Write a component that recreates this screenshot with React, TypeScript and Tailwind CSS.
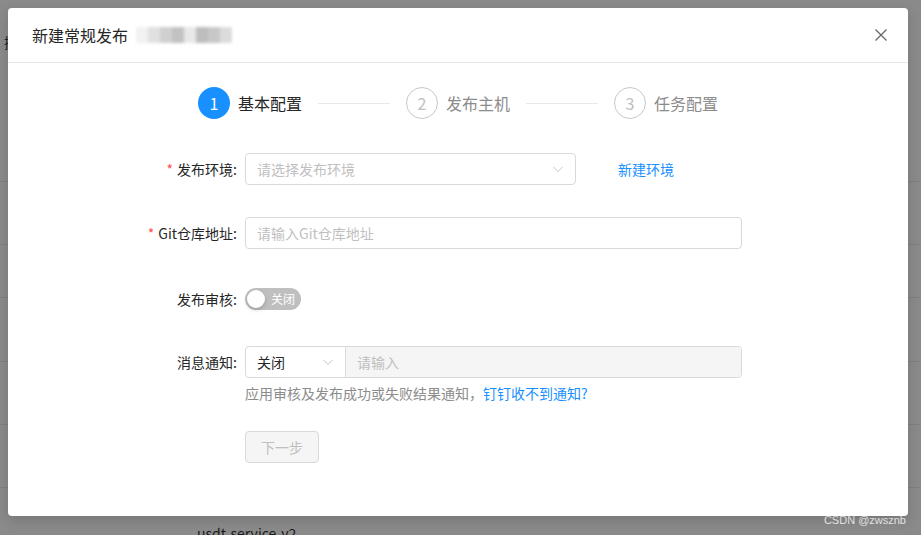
import React from 'react';

const font = { fontFamily: '"Noto Sans CJK SC", "Noto Sans", sans-serif' };

const steps = [
  { n: 1, label: '基本配置', active: true },
  { n: 2, label: '发布主机', active: false },
  { n: 3, label: '任务配置', active: false },
];

const Label: React.FC<{ text: string; required?: boolean }> = ({ text, required }) => (
  <div className="w-[237px] shrink-0 flex items-center justify-end pr-[8px] text-[14px] text-[#262626]">
    {required && <span className="text-[#ff4d4f] mr-[4px] text-[14px] leading-none">*</span>}
    <span>{text}:</span>
  </div>
);

const Chevron = () => (
  <svg width="12" height="12" viewBox="0 0 12 12" fill="none">
    <path d="M1.5 4l4.5 4.5L10.5 4" stroke="#c4c4c4" strokeWidth="1" />
  </svg>
);

export default function App() {
  return (
    <div className="relative w-[921px] h-[535px] overflow-hidden bg-[#8a8a8a]" style={font}>
      {/* background page rows */}
      <div className="flex flex-col">
        <div className="h-[182px] border-b border-[#7f7f7f]" />
        <div className="h-[63px] border-b border-[#7f7f7f]" />
        <div className="h-[53px] border-b border-[#7f7f7f]" />
        <div className="h-[64px] border-b border-[#7f7f7f]" />
        <div className="h-[63px] border-b border-[#7f7f7f]" />
        <div className="h-[63px] border-b border-[#7f7f7f]" />
        <div className="pl-[197px] pt-[35px] text-[14px] text-[#1a1a1a]">usdt-service-v2</div>
      </div>
      <div className="absolute left-[4px] top-[32px] text-[14px] text-[#222]">操</div>
      <div className="absolute right-[15px] top-[512px] text-[11px] text-[#f0f0f0]" style={{ fontFamily: '"Liberation Sans", sans-serif' }}>
        CSDN @zwsznb
      </div>

      {/* modal */}
      <div className="absolute left-[8px] top-[8px] w-[900px] h-[508px] bg-white rounded-[4px] shadow-[0_4px_12px_rgba(0,0,0,0.15)] flex flex-col">
        <div className="h-[55px] border-b border-[#e8e8e8] flex items-center pl-[24px] pr-[20px]">
          <div className="text-[16px] text-[#262626]">新建常规发布</div>
          <div className="ml-[8px] flex h-[20px] items-center blur-[1.5px]">
            <div className="w-[12px] h-[16px] bg-[#f2f2f2]" />
            <div className="w-[12px] h-[16px] bg-[#e0e0e0]" />
            <div className="w-[12px] h-[16px] bg-[#d0d0d0]" />
            <div className="w-[12px] h-[16px] bg-[#c2c2c2]" />
            <div className="w-[12px] h-[16px] bg-[#e8e8e8]" />
            <div className="w-[12px] h-[16px] bg-[#bdbdbd]" />
            <div className="w-[12px] h-[16px] bg-[#c8c8c8]" />
            <div className="w-[12px] h-[16px] bg-[#dcdcdc]" />
          </div>
          <div className="ml-auto">
            <svg width="14" height="14" viewBox="0 0 14 14">
              <path d="M1.5 1.5l11 11M12.5 1.5l-11 11" stroke="#666" strokeWidth="1.3" />
            </svg>
          </div>
        </div>

        {/* steps */}
        <div className="flex items-center pl-[190px] pt-[24px]">
          {steps.map((s, i) => (
            <React.Fragment key={s.n}>
              <div className="flex items-center">
                <div
                  className={`w-[32px] h-[32px] rounded-full flex items-center justify-center text-[16px] ${
                    s.active ? 'bg-[#1890ff] text-white' : 'border border-[#c8c8c8] text-[#bfbfbf]'
                  }`}
                >
                  {s.n}
                </div>
                <div className={`ml-[8px] text-[16px] ${s.active ? 'text-[#262626]' : 'text-[#8c8c8c]'}`}>{s.label}</div>
              </div>
              {i < steps.length - 1 && <div className="mx-[16px] w-[72px] h-px bg-[#e8e8e8]" />}
            </React.Fragment>
          ))}
        </div>

        {/* form */}
        <div className="flex flex-col pt-[34px]">
          <div className="flex items-center h-[32px]">
            <Label text="发布环境" required />
            <div className="w-[331px] h-[32px] border border-[#d9d9d9] rounded-[4px] flex items-center justify-between pl-[11px] pr-[11px] text-[14px] text-[#bfbfbf]">
              <span>请选择发布环境</span>
              <Chevron />
            </div>
            <div className="ml-[42px] text-[14px] text-[#1890ff]">新建环境</div>
          </div>

          <div className="flex items-center h-[32px] mt-[32px]">
            <Label text="Git仓库地址" required />
            <div className="w-[497px] h-[32px] border border-[#d9d9d9] rounded-[4px] flex items-center pl-[11px] text-[14px] text-[#bfbfbf]">
              请输入Git仓库地址
            </div>
          </div>

          <div className="flex items-center h-[32px] mt-[34px]">
            <Label text="发布审核" />
            <div className="w-[56px] h-[22px] rounded-full bg-[#bfbfbf] flex items-center pl-[2px]">
              <div className="w-[18px] h-[18px] rounded-full bg-white shadow-[0_2px_4px_rgba(0,35,11,0.2)]" />
              <span className="ml-[6px] text-[12px] text-white">关闭</span>
            </div>
          </div>

          <div className="flex items-center h-[32px] mt-[31px]">
            <Label text="消息通知" />
            <div className="flex w-[497px] h-[32px] border border-[#d9d9d9] rounded-[4px] text-[14px] overflow-hidden">
              <div className="w-[100px] flex items-center justify-between pl-[11px] pr-[11px] text-[#262626] border-r border-[#d9d9d9]">
                <span>关闭</span>
                <Chevron />
              </div>
              <div className="flex-1 bg-[#f5f5f5] flex items-center pl-[11px] text-[#bfbfbf]">请输入</div>
            </div>
          </div>
          <div className="pl-[237px] mt-[5px] text-[14px] text-[#8c8c8c]">
            应用审核及发布成功或失败结果通知，<span className="text-[#1890ff]">钉钉收不到通知?</span>
          </div>

          <div className="pl-[237px] mt-[27px]">
            <div className="w-[74px] h-[32px] border border-[#d9d9d9] rounded-[4px] bg-[#f5f5f5] flex items-center justify-center text-[14px] text-[#bfbfbf]">
              下一步
            </div>
          </div>
        </div>
      </div>
    </div>
  );
}
